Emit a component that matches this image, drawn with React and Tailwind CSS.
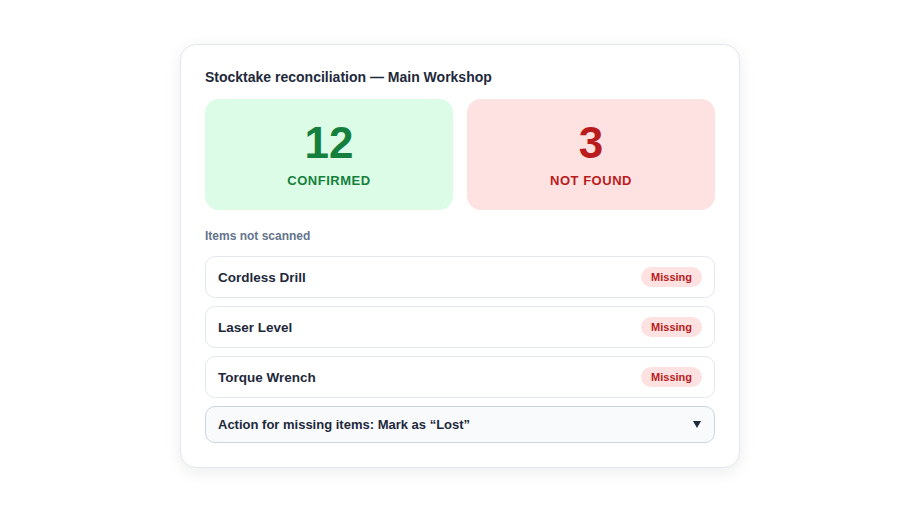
import React from "react";

const missingItems = ["Cordless Drill", "Laser Level", "Torque Wrench"];

const App = () => {
  return (
    <div
      className="w-[920px] h-[512px] bg-white flex items-center justify-center"
      style={{ fontFamily: '"Liberation Sans", Arial, sans-serif' }}
    >
      <div className="w-[560px] bg-white border border-slate-200 rounded-2xl p-6 shadow-[0_4px_16px_rgba(15,23,42,0.08)]">
        <h2 className="text-[14px] leading-tight font-bold text-[#1e293b] mb-3">
          Stocktake reconciliation — Main Workshop
        </h2>

        {/* Summary */}
        <div className="grid grid-cols-2 gap-[14px]">
          <div className="bg-[#dcfce7] rounded-[14px] pt-[22px] pb-[21px] flex flex-col items-center">
            <div className="text-[44px] leading-none font-bold text-[#15803d]">12</div>
            <div className="mt-2 text-[13px] leading-4 font-bold tracking-[0.04em] text-[#15803d]">
              CONFIRMED
            </div>
          </div>
          <div className="bg-[#fee2e2] rounded-[14px] pt-[22px] pb-[21px] flex flex-col items-center">
            <div className="text-[44px] leading-none font-bold text-[#b91c1c]">3</div>
            <div className="mt-2 text-[13px] leading-4 font-bold tracking-[0.04em] text-[#b91c1c]">
              NOT FOUND
            </div>
          </div>
        </div>

        <div className="mt-[18px] mb-3 text-[12px] leading-4 font-bold text-[#64748b]">
          Items not scanned
        </div>

        <div className="flex flex-col gap-2">
          {missingItems.map((item) => (
            <div
              key={item}
              className="flex items-center justify-between border border-slate-200 rounded-[10px] px-3 py-2.5"
            >
              <span className="pt-[3px] text-[13.5px] leading-4 font-bold text-[#1e293b]">{item}</span>
              <span className="h-5 flex items-center px-2.5 rounded-full bg-[#fee2e2] text-[#b91c1c] text-[11px] font-bold">
                Missing
              </span>
            </div>
          ))}

          <div className="flex items-center justify-between bg-[#f8fafc] border border-[#cbd5e1] rounded-[10px] pl-3 pr-[13px] py-2.5">
            <span className="text-[13px] leading-[15px] font-bold text-[#1e293b]">
              Action for missing items: Mark as “Lost”
            </span>
            <svg width="8" height="7" viewBox="0 0 8 7">
              <polygon points="0,0 8,0 4,7" fill="#1e293b" />
            </svg>
          </div>
        </div>
      </div>
    </div>
  );
};

export default App;
